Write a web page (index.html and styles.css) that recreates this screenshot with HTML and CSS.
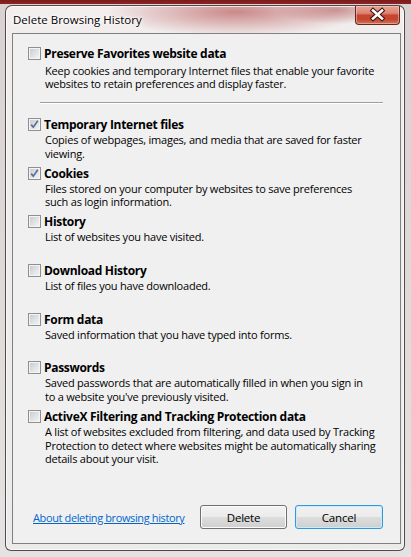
FILE: index.html
```html
<!DOCTYPE html>
<html lang="en">
<head>
<meta charset="utf-8">
<title>Delete Browsing History</title>
<link rel="stylesheet" href="styles.css">
</head>
<body>
<div class="window">
  <div class="titlebar">
    <span class="title">Delete Browsing History</span>
    <div class="close">
      <svg width="43" height="18" viewBox="0 0 43 18">
        <path d="M17 4.5 L26 12.5 M26 4.5 L17 12.5" stroke="#3c1410" stroke-width="4.6" stroke-linecap="square" fill="none"/>
        <path d="M17 4.5 L26 12.5 M26 4.5 L17 12.5" stroke="#ffffff" stroke-width="2.6" stroke-linecap="square" fill="none"/>
      </svg>
    </div>
  </div>
  <div class="client">
    <div class="items">
      <div class="item first">
        <div class="label-row"><span class="cb"></span><span class="label">Preserve Favorites website data</span></div>
        <p class="desc">Keep cookies and temporary Internet files that enable your favorite<br>websites to retain preferences and display faster.</p>
      </div>
      <div class="sep"></div>
      <div class="item">
        <div class="label-row"><span class="cb checked"><svg width="11" height="11" viewBox="0 0 11 11"><path d="M2.2 5.6 L4.3 8.2 L8.8 1.8" stroke="#5a6f9f" stroke-width="1.7" fill="none"/></svg></span><span class="label">Temporary Internet files</span></div>
        <p class="desc">Copies of webpages, images, and media that are saved for faster<br>viewing.</p>
      </div>
      <div class="item">
        <div class="label-row"><span class="cb checked"><svg width="11" height="11" viewBox="0 0 11 11"><path d="M2.2 5.6 L4.3 8.2 L8.8 1.8" stroke="#5a6f9f" stroke-width="1.7" fill="none"/></svg></span><span class="label">Cookies</span></div>
        <p class="desc">Files stored on your computer by websites to save preferences<br>such as login information.</p>
      </div>
      <div class="item">
        <div class="label-row"><span class="cb"></span><span class="label">History</span></div>
        <p class="desc">List of websites you have visited.</p>
      </div>
      <div class="item">
        <div class="label-row"><span class="cb"></span><span class="label">Download History</span></div>
        <p class="desc">List of files you have downloaded.</p>
      </div>
      <div class="item">
        <div class="label-row"><span class="cb"></span><span class="label">Form data</span></div>
        <p class="desc">Saved information that you have typed into forms.</p>
      </div>
      <div class="item">
        <div class="label-row"><span class="cb"></span><span class="label">Passwords</span></div>
        <p class="desc">Saved passwords that are automatically filled in when you sign in<br>to a website you've previously visited.</p>
      </div>
      <div class="item">
        <div class="label-row"><span class="cb"></span><span class="label">ActiveX Filtering and Tracking Protection data</span></div>
        <p class="desc">A list of websites excluded from filtering, and data used by Tracking<br>Protection to detect where websites might be automatically sharing<br>details about your visit.</p>
      </div>
    </div>
    <div class="footer">
      <a class="link" href="#">About deleting browsing history</a>
      <div class="buttons">
        <button class="btn">Delete</button>
        <button class="btn default">Cancel</button>
      </div>
    </div>
  </div>
</div>
</body>
</html>
```
FILE: styles.css
```css
html, body {
  margin: 0;
  height: 100%;
}
body {
  background: linear-gradient(to bottom, #7a1b1b 0, #8c2424 4px, #d9d2d2 4px, #e4e2e2 100%);
  font-family: "Open Sans", "Noto Sans", sans-serif;
  overflow: hidden;
}
.window {
  box-sizing: border-box;
  width: 400px;
  height: 546px;
  margin: 5px 0 0 5px;
  border: 1px solid rgba(50, 30, 30, 0.8);
  border-radius: 7px 7px 6px 6px;
  background:
    radial-gradient(ellipse 130px 24px at 230px 6px, rgba(175, 70, 70, 0.6), rgba(175, 70, 70, 0)),
    radial-gradient(ellipse 60px 14px at 330px 4px, rgba(160, 60, 60, 0.45), rgba(160, 60, 60, 0)),
    linear-gradient(to bottom, #f4eeee 0, #f1eded 30px, #ebebeb 100%);
  box-shadow: inset 0 0 0 1px rgba(255, 255, 255, 0.7);
  display: flex;
  flex-direction: column;
}
.titlebar {
  box-sizing: border-box;
  height: 27px;
  flex-shrink: 0;
  display: flex;
  justify-content: space-between;
  align-items: flex-start;
  padding: 0 4px 0 7px;
}
.title {
  font-size: 11.5px;
  line-height: 14px;
  margin-top: 7px;
  color: #000;
  white-space: nowrap;
  text-shadow: 0 0 6px #fff, 0 0 4px #fff, 0 0 2px #fff;
}
.close {
  box-sizing: border-box;
  width: 45px;
  height: 19px;
  border: 1px solid #5e2a24;
  border-top: none;
  border-radius: 0 0 4px 4px;
  background: linear-gradient(to bottom, #e8a496 0, #db8573 40%, #c7452f 52%, #c4472f 75%, #d2735a 100%);
  box-shadow: inset 0 0 0 1px rgba(255, 220, 210, 0.45);
  display: flex;
  align-items: center;
  justify-content: center;
}
.close svg {
  display: block;
}
.client {
  box-sizing: border-box;
  height: 511px;
  margin: 0 3px 0 6px;
  border: 1px solid #808080;
  background: #f0f0f0;
  display: flex;
  flex-direction: column;
  padding: 13px 17px 14px 15px;
  color: #000;
}
.items {
  display: flex;
  flex-direction: column;
}
.item {
  height: 48.7px;
  flex-shrink: 0;
}
.item.first {
  height: auto;
}
.label-row {
  display: flex;
  align-items: center;
  gap: 3px;
  height: 13px;
}
.cb {
  box-sizing: border-box;
  width: 13px;
  height: 13px;
  flex-shrink: 0;
  border: 1px solid #8e8f8f;
  background: linear-gradient(135deg, #c4c8ce 0, #e2e3e5 55%, #f6f6f6 100%);
  box-shadow: inset 0 0 0 1px #f4f4f4;
  display: flex;
  align-items: center;
  justify-content: center;
}
.cb svg {
  display: block;
}
.label {
  font-size: 12px;
  font-weight: bold;
  line-height: 13px;
  letter-spacing: -0.3px;
  white-space: nowrap;
}
.desc {
  margin: 2px 0 0 17px;
  font-size: 11px;
  line-height: 13.5px;
  letter-spacing: -0.22px;
  white-space: nowrap;
}
.first .desc {
  margin-top: 3.5px;
}
.sep {
  height: 1px;
  background: #a0a0a0;
  border-bottom: 1px solid #ffffff;
  margin: 11.5px 0 14px 12px;
  flex-shrink: 0;
}
.footer {
  margin-top: auto;
  display: flex;
  align-items: center;
  justify-content: space-between;
  padding-left: 5px;
}
.link {
  color: #0066cc;
  font-size: 11px;
  letter-spacing: -0.38px;
  text-decoration: underline;
  white-space: nowrap;
}
.buttons {
  display: flex;
  gap: 8px;
}
.btn {
  box-sizing: border-box;
  width: 87px;
  height: 24px;
  padding: 0;
  border: 1px solid #707070;
  border-radius: 3px;
  background: linear-gradient(to bottom, #f2f2f2 0, #ebebeb 48%, #dddddd 52%, #cfcfcf 100%);
  box-shadow: inset 0 0 0 1px #fbfbfb;
  font-family: "Open Sans", "Noto Sans", sans-serif;
  font-size: 11.5px;
  letter-spacing: -0.2px;
  color: #000;
}
.btn.default {
  width: 88px;
  border-color: #3399dd;
  box-shadow: inset 0 0 0 1px #c6ecfb;
}
```
